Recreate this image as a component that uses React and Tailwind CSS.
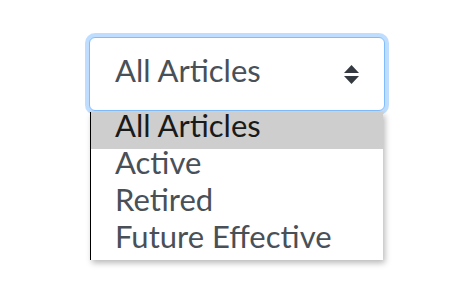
import React from 'react';

const options = ['All Articles', 'Active', 'Retired', 'Future Effective'];

const SortIcon = () => (
    <svg width="15" height="19" viewBox="0 0 15 19" className="block">
        <path d="M7.5 0 L15 8 L0 8 Z" fill="#343a40" />
        <path d="M0 11 L15 11 L7.5 19 Z" fill="#343a40" />
    </svg>
);

const App = () => {
    return (
        <div className="min-h-screen bg-white font-['Lato',sans-serif]">
            <div className="pl-[89px] pt-[37px]">
                <div className="w-[296px]">
                    <div className="h-[74px] flex items-center justify-between pl-[25px] pr-[25px] bg-white border border-[#80bdff] rounded-[6px] shadow-[0_0_0_4px_rgba(0,123,255,0.25)] text-[#495057]">
                        <span className="text-[31px] leading-none pb-[8px]">All Articles</span>
                        <SortIcon />
                    </div>
                    <div className="relative ml-[1px] mt-[1px] w-[293px] bg-white border-l border-black shadow-[2px_3px_6px_rgba(0,0,0,0.28)]">
                        {options.map((o, i) => (
                            <div
                                key={o}
                                className={
                                    i === 0
                                        ? 'h-[37px] flex items-center pl-[24px] pb-[10px] text-[31px] leading-none bg-[#cecece] text-[#1a1a1a]'
                                        : 'h-[37px] flex items-center pl-[24px] pb-[10px] text-[31px] leading-none text-[#495057]'
                                }
                            >
                                {o}
                            </div>
                        ))}
                    </div>
                </div>
            </div>
        </div>
    );
};

export default App;
